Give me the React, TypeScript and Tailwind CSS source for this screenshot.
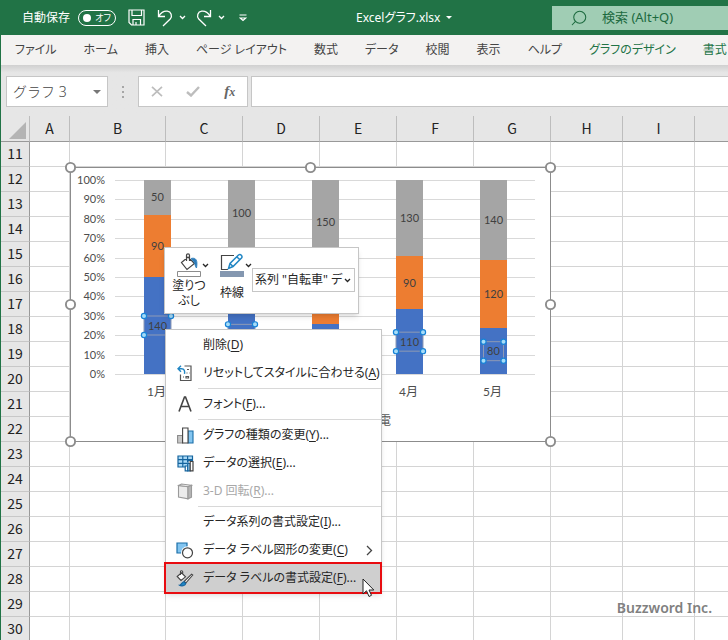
import { useState } from "react";
import type { ReactNode } from "react";
import clsx from "clsx";
import { Search } from "lucide-react";

const TABS = ["ファイル", "ホーム", "挿入", "ページ レイアウト", "数式", "データ", "校閲", "表示", "ヘルプ"];
const CHART_TABS = ["グラフのデザイン", "書式"];

const COLUMNS = [
  { name: "A", width: "w-[40px]" },
  { name: "B", width: "w-[96px]" },
  { name: "C", width: "w-[77px]" },
  { name: "D", width: "w-[77px]" },
  { name: "E", width: "w-[77px]" },
  { name: "F", width: "w-[77px]" },
  { name: "G", width: "w-[77px]" },
  { name: "H", width: "w-[72px]" },
  { name: "I", width: "w-[72px]" },
  { name: "J", width: "w-[96px]" },
];
const ROWS = Array.from({ length: 20 }, (_, i) => 11 + i);

// bottom, middle and top series of each stacked bar
const DATA = [
  { month: "1月", values: [140, 90, 50] },
  { month: "2月", values: [120, 70, 100] },
  { month: "3月", values: [90, 110, 150] },
  { month: "4月", values: [110, 90, 130] },
  { month: "5月", values: [80, 120, 140] },
];
const SERIES_COLORS = ["#4472c4", "#ed7d31", "#a5a5a5"];

const PLOT = { left: 45, right: 465, top: 13, bottom: 207 };

function Chevron({ className }: { className?: string }) {
  return (
    <svg width="7" height="5" viewBox="0 0 7 5" className={className} aria-hidden="true">
      <path d="M1 1l2.5 2.5L6 1" fill="none" stroke="currentColor" strokeWidth="1.3" />
    </svg>
  );
}

function TitleBar() {
  const [autoSave, setAutoSave] = useState(false);

  return (
    <header className="flex h-[35px] shrink-0 items-center bg-[#217346] pl-[21px] text-xs text-white">
      <label htmlFor="autosave" className="shrink-0">自動保存</label>
      <button
        id="autosave"
        role="switch"
        aria-checked={autoSave}
        onClick={() => setAutoSave(!autoSave)}
        className="ml-2 flex h-4 w-[38px] shrink-0 items-center justify-between rounded-full border border-white pr-1 pl-1 text-[9px] leading-none"
      >
        <span className="size-2 shrink-0 rounded-full bg-white" />
        {autoSave ? "オン" : "オフ"}
      </button>
      <button aria-label="上書き保存" className="ml-3 shrink-0">
        <svg width="17" height="17" viewBox="0 0 17 17" fill="none" stroke="white" strokeWidth="1.2">
          <path d="M1 1h15v15H3.5L1 13.5zM4 1v5.5h9.500V1M5 16v-5.500h7.500V16M8 13v3" />
        </svg>
      </button>
      <button aria-label="元に戻す" className="ml-3 flex shrink-0 items-center gap-1.5">
        <svg width="16" height="18" viewBox="0 0 16 18" fill="none" stroke="white" strokeWidth="1.3">
          <path d="M1.500 1v6.500h6.500M1.700 7.300C4 3.600 7 1.800 10.300 2.200c3.900.6 5.400 4.800 2.900 7.800L6 17" />
        </svg>
        <Chevron />
      </button>
      <button aria-label="やり直し" className="ml-2.5 flex shrink-0 items-center gap-1.5">
        <svg width="16" height="18" viewBox="0 0 16 18" fill="none" stroke="white" strokeWidth="1.3">
          <path d="M14.500 1v6.500H8M14.300 7.300C12 3.600 9 1.800 5.700 2.200c-3.900.6-5.400 4.800-2.900 7.800L10 17" />
        </svg>
        <Chevron />
      </button>
      <button aria-label="クイック アクセス ツール バーのカスタマイズ" className="ml-3.5 shrink-0">
        <svg width="8" height="8" viewBox="0 0 8 8" fill="none" stroke="white" strokeWidth="1.2">
          <path d="M.5 1h7M1.200 4L4 6.500 6.800 4z" />
        </svg>
      </button>
      <button className="ml-[109px] flex shrink-0 items-center gap-1.5">
        Excelグラフ.xlsx
        <svg width="6" height="3" viewBox="0 0 6 3" fill="white">
          <path d="M0 0h6L3 3z" />
        </svg>
      </button>
      <div className="ml-auto flex h-6 w-44 shrink-0 items-center bg-[#a0cdb4] pl-[18px] text-[#1c6a3f]">
        <Search size={18} strokeWidth={1.4} className="-scale-x-100" />
        <input
          aria-label="検索"
          placeholder="検索 (Alt+Q)"
          className="ml-3.5 w-28 bg-transparent text-[13px] outline-none placeholder:text-[#1c6a3f]"
        />
      </div>
    </header>
  );
}

function RibbonTabs() {
  return (
    <nav className="flex h-[30px] shrink-0 items-center gap-[27px] overflow-hidden whitespace-nowrap bg-[#f3f2f1] pl-3.5 text-xs text-[#444]">
      {TABS.map((tab) => (
        <button key={tab} className="shrink-0">{tab}</button>
      ))}
      {CHART_TABS.map((tab) => (
        <button key={tab} className="shrink-0 text-[#217346]">{tab}</button>
      ))}
    </nav>
  );
}

function FormulaBar() {
  return (
    <div className="flex h-[51px] shrink-0 bg-linear-to-b from-[#d0d0d0] to-[#e6e6e6] to-15% pt-[11px] pl-[5px]">
      <div className="flex h-[31px] w-[102px] shrink-0 items-center border border-[#c6c6c6] bg-white pr-1.5">
        <input
          aria-label="名前ボックス"
          defaultValue="グラフ 3"
          className="w-20 grow bg-transparent pl-1.5 text-sm font-light text-[#444] outline-none [font-feature-settings:normal]"
        />
        <button aria-label="名前の一覧">
          <svg width="8" height="4" viewBox="0 0 8 4" fill="#777">
            <path d="M0 0h8L4 4z" />
          </svg>
        </button>
      </div>
      <div className="flex h-[31px] w-[30px] shrink-0 flex-col items-center justify-center gap-[3px]">
        <span className="size-0.5 bg-[#a6a6a6]" />
        <span className="size-0.5 bg-[#a6a6a6]" />
        <span className="size-0.5 bg-[#a6a6a6]" />
      </div>
      <div className="flex h-[31px] w-[110px] shrink-0 items-center justify-around border border-[#c6c6c6] bg-white">
        <button aria-label="キャンセル">
          <svg width="12" height="11" viewBox="0 0 12 11" fill="none" stroke="#bdbdbd" strokeWidth="1.700">
            <path d="M1 .8l10 9.400M11 .8L1 10.200" />
          </svg>
        </button>
        <button aria-label="入力">
          <svg width="14" height="11" viewBox="0 0 14 11" fill="none" stroke="#bdbdbd" strokeWidth="2.400">
            <path d="M1 6l4 3.500L13 1" />
          </svg>
        </button>
        <button className="font-['Liberation_Serif',serif] text-[15px] leading-none font-bold text-[#666] italic">
          f<span className="text-xs">x</span>
        </button>
      </div>
      <input
        aria-label="数式バー"
        className="ml-[3px] h-[31px] min-w-0 grow border border-r-0 border-[#c6c6c6] bg-white outline-none"
      />
    </div>
  );
}

function Grid() {
  return (
    <table className="w-[790px] table-fixed border-separate border-spacing-0 font-['Noto_Sans_CJK_JP',sans-serif] text-sm text-[#222] [font-feature-settings:normal]">
      <thead>
        <tr className="h-[26px] bg-[#e6e6e6]">
          <th className="w-[29px] border-r border-b border-r-[#bdbdbd] border-b-[#999] p-0">
            <svg width="17" height="17" viewBox="0 0 17 17" fill="#b4b4b4" className="mt-1 ml-2">
              <path d="M17 0v17H0z" />
            </svg>
          </th>
          {COLUMNS.map((col) => (
            <th
              key={col.name}
              className={clsx("border-r border-b border-r-[#bdbdbd] border-b-[#999] p-0 pb-0.5 leading-5 font-normal", col.width)}
            >
              {col.name}
            </th>
          ))}
        </tr>
      </thead>
      <tbody>
        {ROWS.map((row) => (
          <tr key={row} className="h-[25px]">
            <th className="border-r border-b border-r-[#999] border-b-[#c8c8c8] bg-[#e6e6e6] p-0 pb-0.5 leading-5 font-normal">
              {row}
            </th>
            {COLUMNS.map((col) => (
              <td key={col.name} className="border-r border-b border-[#d4d4d4] p-0" />
            ))}
          </tr>
        ))}
      </tbody>
    </table>
  );
}

function LabelHandles({ cx, cy, width }: { cx: number; cy: number; width: number }) {
  const x = cx - width / 2;
  const y = cy - 9.5;
  return (
    <g>
      <rect x={x} y={y} width={width} height="19" fill="none" stroke="#8e9ab5" />
      {[x, x + width].map((hx) =>
        [y, y + 19].map((hy) => (
          <circle key={`${hx}-${hy}`} cx={hx} cy={hy} r="2.6" fill="#a6dcf8" stroke="#1883d7" strokeWidth="1.200" />
        ))
      )}
    </g>
  );
}

function StackedChart() {
  const height = PLOT.bottom - PLOT.top;
  const step = (PLOT.right - PLOT.left) / DATA.length;

  return (
    <svg
      width="481"
      height="275"
      viewBox="0 0 481 275"
      className="absolute top-[51px] left-[69px] overflow-visible font-[Lato,'Noto_Sans_CJK_JP',sans-serif] text-[11px]"
    >
      <rect x="0.5" y="0.5" width="480" height="274" fill="white" stroke="#8c8c8c" />

      {/* Value axis */}
      {Array.from({ length: 11 }, (_, i) => {
        const y = Math.round(PLOT.bottom - (height * i) / 10);
        return (
          <g key={i}>
            <path d={`M${PLOT.left} ${y + 0.5}H${PLOT.right}`} stroke="#d9d9d9" />
            <text x="35" y={y + 4} textAnchor="end" fill="#4d4d4d">{i * 10}%</text>
          </g>
        );
      })}

      {/* Bars */}
      {DATA.map((d, i) => {
        const total = d.values.reduce((a, b) => a + b, 0);
        const cx = PLOT.left + step * i + 42.5;
        let y = PLOT.bottom;
        return (
          <g key={d.month}>
            {d.values.map((value, s) => {
              const h = (height * value) / total;
              y -= h;
              const mid = y + h / 2;
              return (
                <g key={s}>
                  <rect x={cx - 13.5} y={y} width="27" height={h} fill={SERIES_COLORS[s]} shapeRendering="crispEdges" />
                  {s === 0 && <LabelHandles cx={cx} cy={mid} width={value < 100 ? 20 : 27} />}
                  <text x={cx} y={mid + 4} textAnchor="middle" fill="#404040">{value}</text>
                </g>
              );
            })}
            <text x={cx - 1} y="229" textAnchor="middle" fill="#4d4d4d" className="text-xs">{d.month}</text>
          </g>
        );
      })}
      <text x="321" y="258" textAnchor="end" fill="#595959" className="text-xs">電</text>

      {/* Resize handles */}
      {[[0, 0], [240, 0], [480, 0], [0, 137], [480, 137], [0, 274], [240, 274], [480, 274]].map(([x, y]) => (
        <circle key={`${x}-${y}`} cx={x + 0.5} cy={y + 0.5} r="4.600" fill="white" stroke="#8c8c8c" strokeWidth="1.900" />
      ))}
    </svg>
  );
}

function MiniToolbar() {
  return (
    <div className="absolute top-[131px] left-[163px] flex h-[67px] w-[195px] border border-[#c6c6c6] bg-white text-xs leading-4 text-[#262626] shadow-md">
      <button className="flex w-12 flex-col items-center pt-[5px]">
        <span className="flex items-center gap-px pl-2">
          <svg width="24" height="24" viewBox="0 0 24 24" fill="none" stroke="#444" strokeWidth="1.200">
            <path d="M4.500 9.500L11 4l6.500 6.500L10 16.500zM9.500 8V2.500c0-2.300 3-2.300 3 0V8" />
            <path d="M14 5.500c5-1.500 7 2 5.500 9.500-1.500-1-1.300-5.500-3-6.500z" fill="#2b7bb9" stroke="#2b7bb9" strokeWidth="0.800" />
            <path d="M.5 18.500h23v5H.5z" stroke="#8c8c8c" fill="white" strokeWidth="1" />
          </svg>
          <Chevron className="shrink-0" />
        </span>
        <span className="mt-px leading-[15px]">塗りつ<br />ぶし</span>
      </button>
      <button className="flex w-[38px] flex-col items-center pt-[5px]">
        <span className="flex items-center gap-px pl-2">
          <svg width="24" height="24" viewBox="0 0 24 24" fill="none" stroke="#444" strokeWidth="1.200">
            <path d="M14 2.500H1.500v14H8" />
            <path d="M8.500 15.500l1.500-5L18.500 2c2-1.500 4.500 1 3 3L13 13.500zM10 10.500l3 3M16.800 3.800l3 3" stroke="#2186c4" strokeWidth="1.500" />
            <path d="M0 18h24v6H0z" fill="#8497b0" stroke="none" />
          </svg>
          <Chevron className="shrink-0" />
        </span>
        <span className="mt-2">枠線</span>
      </button>
      <div className="relative mt-5 ml-px h-6 w-[103px]">
        <select
          aria-label="グラフ要素"
          className="h-6 w-full appearance-none border border-[#c6c6c6] bg-white pl-0.5 text-xs outline-none"
        >
          <option>系列 "自転車" デ</option>
        </select>
        <Chevron className="pointer-events-none absolute top-2.5 right-1" />
      </div>
    </div>
  );
}

function MenuItem({ label, accel, more, icon, submenu, disabled, selected }: {
  label: string;
  accel: string;
  more?: boolean;
  icon?: ReactNode;
  submenu?: boolean;
  disabled?: boolean;
  selected?: boolean;
}) {
  return (
    <button
      role="menuitem"
      disabled={disabled}
      className={clsx(
        "flex items-center pl-[9px] text-left",
        disabled && "text-[#a8a8a8]",
        selected ? "-mx-0.5 -mt-0.5 -mb-0.5 h-8 w-[218px] border-2 border-[#e80c10] bg-[#cfcfcf]" : "h-7 w-full pr-2"
      )}
    >
      <span className="mr-2 flex w-5 shrink-0 justify-center">{icon}</span>
      <span className="grow whitespace-nowrap">
        {label}(<u className="underline-offset-2">{accel}</u>){more && "..."}
      </span>
      {submenu && (
        <svg width="7" height="11" viewBox="0 0 7 11" fill="none" stroke="#444" strokeWidth="1.300">
          <path d="M1 1l4.500 4.500L1 10" />
        </svg>
      )}
    </button>
  );
}

function Separator() {
  return (
    <div role="separator" className="py-px pl-8">
      <div className="h-px bg-[#d8d8d8]" />
    </div>
  );
}

const resetIcon = (
  <svg width="17" height="17" viewBox="0 0 17 17" fill="none" stroke="#555" strokeWidth="1.200">
    <path d="M7.500 1h6.500v14.500H3.500V9.500M10 4.500h2M9.500 8h1M12 8h.5M6 12h1M9 11.500h2.500v1.500H9z" />
    <path d="M4 .8L1 3.800l3 3M1 3.800h3.500c3 0 3.500 2.500 3 5" stroke="#2186c4" strokeWidth="1.400" />
  </svg>
);

const fontIcon = (
  <svg width="16" height="16" viewBox="0 0 16 16" fill="none" stroke="#444" strokeWidth="1.600">
    <path d="M2 15.500L7.500 1h1L14 15.500M4 10.500h8" />
  </svg>
);

const chartIcon = (
  <svg width="17" height="17" viewBox="0 0 17 17" strokeWidth="1.100">
    <path d="M.6 8.500h5v7.500h-5z" fill="#c8c8c8" stroke="#8a8a8a" />
    <path d="M11 4h5v12h-5z" fill="#83c5f0" stroke="#1a6ea8" />
    <path d="M5.600 1h5.400v15H5.600z" fill="white" stroke="#444" />
  </svg>
);

const dataIcon = (
  <svg width="17" height="17" viewBox="0 0 17 17" fill="none" strokeWidth="1.200">
    <path d="M1 1h14.500v4.500H11V12H1z" fill="#a9d8f5" stroke="#15649e" />
    <path d="M1 4.700h14.500M1 8.400h9M5.800 1v11M10.600 1v6" stroke="#15649e" />
    <path d="M8.200 11h2.600v4.800H8.200z" fill="white" stroke="#15649e" />
    <path d="M10.800 8.500h2.400v7.300h-2.400z" fill="#a9d8f5" stroke="#15649e" />
    <path d="M13.200 6.500H16v9.300h-2.800z" fill="white" stroke="#444" />
  </svg>
);

const rotateIcon = (
  <svg width="16" height="17" viewBox="0 0 16 17" fill="#ececec" stroke="#9a9a9a" strokeWidth="1.100">
    <path d="M1.500 2.500l9.500 1.300v12L1.500 14z" />
    <path d="M1.500 2.500L4.500 1l10 1.300L11 3.800z" />
    <path d="M11 3.800l3.500-1.500v11.900L11 15.800z" fill="#b5b5b5" />
  </svg>
);

const shapeIcon = (
  <svg width="18" height="17" viewBox="0 0 18 17" strokeWidth="1.200">
    <path d="M1 1h10v10H1z" fill="#83c5f0" stroke="#1a6ea8" />
    <circle cx="11.500" cy="10.800" r="6.500" fill="white" stroke="none" />
    <circle cx="11.500" cy="10.800" r="5" fill="white" stroke="#444" />
  </svg>
);

const formatIcon = (
  <svg width="18" height="17" viewBox="0 0 18 17" fill="none" strokeWidth="1.100">
    <path d="M1.200 6.500L5.500 2.800l4 4L5 10.500zM4.500 5V1.800c0-1.500 2.200-1.500 2.200 0V5" stroke="#444" fill="white" />
    <path d="M16.800 5L10 12.800 8.300 11.300l7.300-7.100z" fill="white" stroke="#444" />
    <path d="M3.500 15.200c2-.3 2-3 4.300-3.500l2 1.800c-.5 2.500-4.300 3-6.300 1.700z" fill="#2186c4" stroke="#15649e" />
  </svg>
);

function ContextMenu() {
  return (
    <div
      role="menu"
      className="absolute top-[213px] left-[164px] w-[217px] border border-[#c6c6c6] bg-white pt-px text-xs text-[#262626] shadow-md"
    >
      <MenuItem label="削除" accel="D" />
      <MenuItem label="リセットしてスタイルに合わせる" accel="A" icon={resetIcon} />
      <Separator />
      <MenuItem label="フォント" accel="F" more icon={fontIcon} />
      <Separator />
      <MenuItem label="グラフの種類の変更" accel="Y" more icon={chartIcon} />
      <MenuItem label="データの選択" accel="E" more icon={dataIcon} />
      <MenuItem label="3-D 回転" accel="R" more icon={rotateIcon} disabled />
      <Separator />
      <MenuItem label="データ系列の書式設定" accel="I" more />
      <MenuItem label="データ ラベル図形の変更" accel="C" icon={shapeIcon} submenu />
      <MenuItem label="データ ラベルの書式設定" accel="F" more icon={formatIcon} selected />
      <svg width="13" height="20" viewBox="0 0 13 20" className="absolute right-1.5 -bottom-1.5" aria-hidden="true">
        <path d="M1 1v15l3.500-3.200L7 18.500l2.500-1.200L7 12h4.800z" fill="white" stroke="#222" />
      </svg>
    </div>
  );
}

export default function App() {
  return (
    <div className="flex h-screen flex-col overflow-hidden border-l border-[#217346] bg-white font-['Noto_Sans','Noto_Sans_CJK_JP',sans-serif] [font-feature-settings:'palt']">
      <TitleBar />
      <RibbonTabs />
      <FormulaBar />
      <main className="relative min-h-0 grow overflow-hidden">
        <Grid />
        <StackedChart />
        <MiniToolbar />
        <ContextMenu />
        <p className="absolute right-4 bottom-[22px] text-sm font-semibold text-[#808080]">Buzzword Inc.</p>
      </main>
    </div>
  );
}
